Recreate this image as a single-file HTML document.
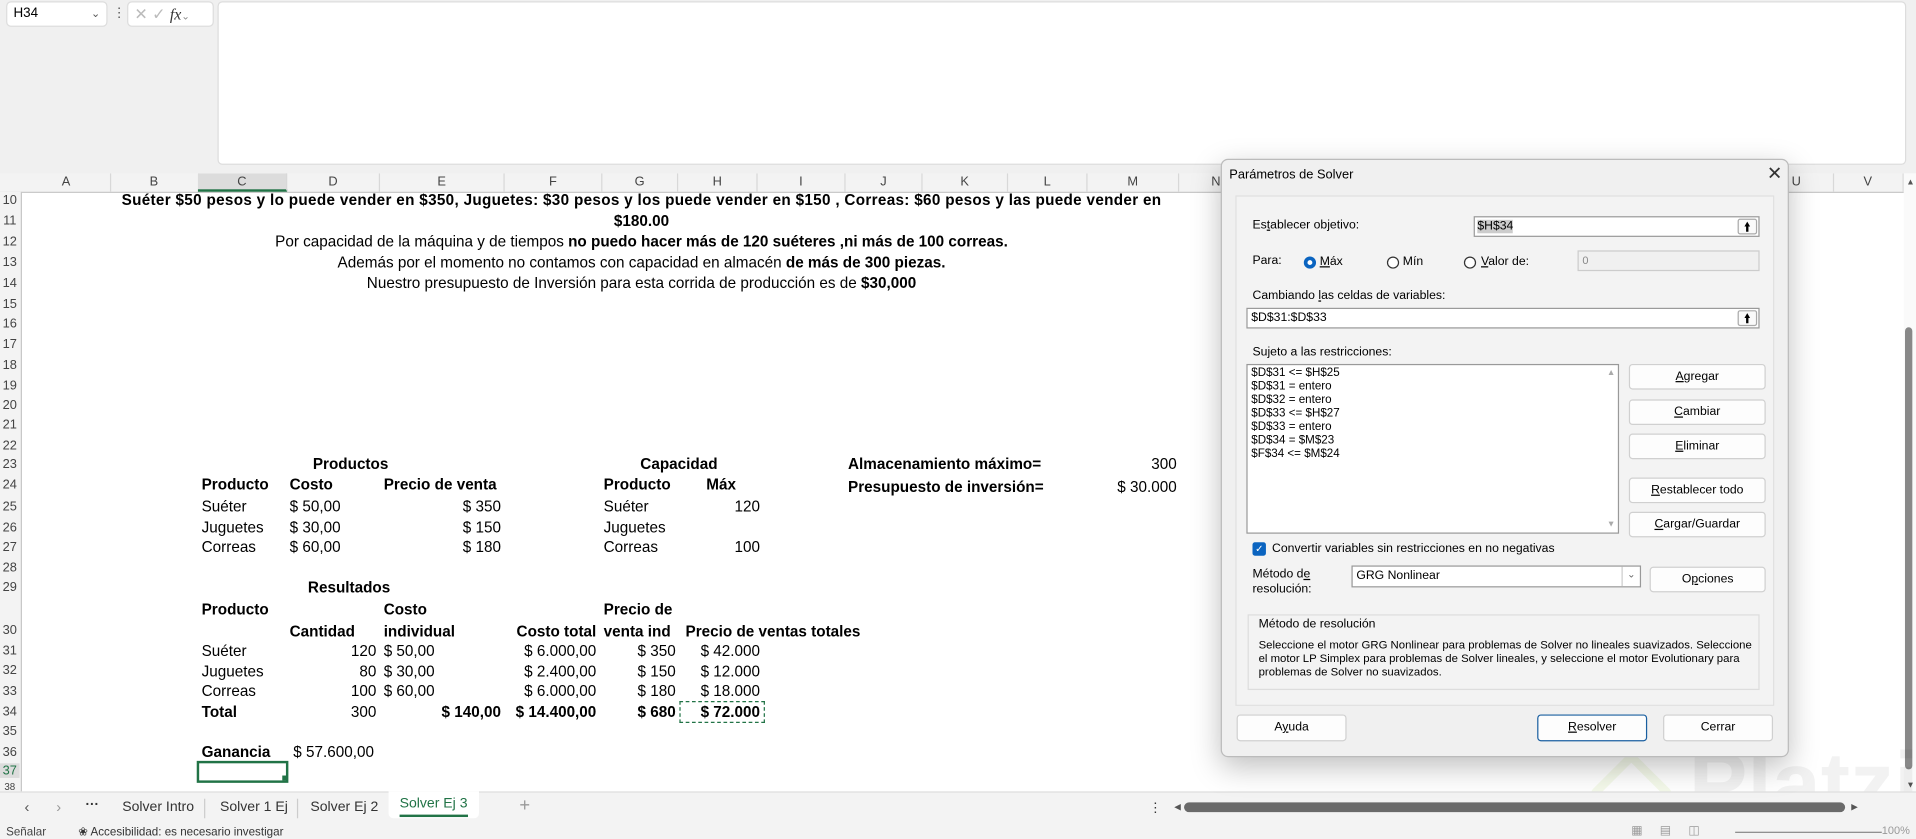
<!DOCTYPE html>
<html><head><meta charset="utf-8"><style>
html,body{margin:0;padding:0;width:1916px;height:839px;overflow:hidden;background:#fff}
#s{position:absolute;left:0;top:0;width:1568px;height:687px;transform:scale(1.22194,1.2213);transform-origin:0 0;background:#fff;font-family:"Liberation Sans",sans-serif;color:#000}
.a{position:absolute;white-space:nowrap}
.c{font-size:12.5px;line-height:16px}
.b{font-weight:bold}
.r{text-align:right}
.rn{position:absolute;left:0;width:16px;text-align:center;font-size:10.5px;color:#444}
.ch{position:absolute;top:142px;height:15px;font-size:10.5px;color:#444;text-align:center;line-height:15px;border-right:1px solid #d8d8d8}
.d{font-size:10px;color:#000}
.btn{position:absolute;background:#fdfdfd;border:1px solid #d0d0d0;border-radius:3px;font-size:10px;text-align:center;line-height:19px;box-sizing:border-box}
.inp{position:absolute;background:#fff;border:1px solid #999;box-sizing:border-box}
.up{position:absolute;right:1px;top:1px;width:14px;bottom:1px;border:1px solid #aaa;border-radius:2px;background:#fafafa;font-size:10px;text-align:center;line-height:14px;font-weight:bold}
.rad{position:absolute;width:10px;height:10px;border:1px solid #333;border-radius:50%;box-sizing:border-box;background:#fff}
u{text-decoration:underline}
</style></head><body><div id="s">
<div class="a" style="left:0;top:0;width:1568px;height:142px;background:#f0f0f0"></div>
<div class="a" style="left:5px;top:1px;width:83px;height:21px;background:#fff;border:1px solid #ddd;border-radius:4px;box-sizing:border-box;font-size:11px;line-height:19px;padding-left:5px">H34<span style="position:absolute;right:5px;color:#555;font-size:9px">&#8964;</span></div>
<div class="a" style="left:92px;top:4px;font-size:11px;color:#555">&#8942;</div>
<div class="a" style="left:104px;top:1px;width:71px;height:21px;background:#fff;border:1px solid #ddd;border-radius:4px;box-sizing:border-box;font-size:13px;line-height:19px;color:#bbb;padding-left:5px">&#x2715; &#x2713; <i style="color:#333;font-family:'Liberation Serif',serif">fx</i><span style="font-size:8px;color:#888">&#8964;</span></div>
<div class="a" style="left:178px;top:1px;width:1382px;height:134px;background:#fff;border:1px solid #ddd;border-radius:4px;box-sizing:border-box"></div>
<div class="a" style="left:0;top:142px;width:1558px;height:15px;background:#f3f3f3;border-bottom:1px solid #c8c8c8"></div>
<div class="ch" style="left:18px;width:72px">A</div><div class="ch" style="left:90px;width:72px">B</div>
<div class="ch" style="left:162px;width:72px;background:#dcdcdc;border-bottom:2px solid #217346;height:13px">C</div>
<div class="ch" style="left:235px;width:75px">D</div><div class="ch" style="left:311px;width:101px">E</div>
<div class="ch" style="left:413px;width:79px">F</div><div class="ch" style="left:493px;width:61px">G</div>
<div class="ch" style="left:555px;width:64px">H</div><div class="ch" style="left:620px;width:71px">I</div>
<div class="ch" style="left:692px;width:62px">J</div><div class="ch" style="left:755px;width:69px">K</div>
<div class="ch" style="left:825px;width:64px">L</div><div class="ch" style="left:890px;width:74px">M</div>
<div class="ch" style="left:965px;width:60px">N</div>
<div class="ch" style="left:1440px;width:60px">U</div><div class="ch" style="left:1500px;width:57px">V</div>
<div class="a" style="left:0;top:157px;width:17px;height:491px;background:#f3f3f3;border-right:1px solid #c8c8c8"></div>
<div class="rn" style="top:158px">10</div><div class="rn" style="top:175px">11</div><div class="rn" style="top:192px">12</div><div class="rn" style="top:209px">13</div><div class="rn" style="top:226px">14</div><div class="rn" style="top:243px">15</div><div class="rn" style="top:259px">16</div><div class="rn" style="top:276px">17</div><div class="rn" style="top:293px">18</div><div class="rn" style="top:310px">19</div><div class="rn" style="top:326px">20</div><div class="rn" style="top:342px">21</div><div class="rn" style="top:359px">22</div><div class="rn" style="top:374px">23</div><div class="rn" style="top:391px">24</div><div class="rn" style="top:409px">25</div><div class="rn" style="top:426px">26</div><div class="rn" style="top:442px">27</div><div class="rn" style="top:459px">28</div><div class="rn" style="top:475px">29</div><div class="rn" style="top:510px">30</div><div class="rn" style="top:527px">31</div><div class="rn" style="top:543px">32</div><div class="rn" style="top:560px">33</div><div class="rn" style="top:577px">34</div><div class="rn" style="top:593px">35</div><div class="rn" style="top:610px">36</div><div class="rn" style="top:625px;color:#217346;background:#dcdcdc">37</div><div class="rn" style="top:640px;font-size:8px">38</div>
<div class="a c b" style="left:90px;width:870px;text-align:center;top:156px;letter-spacing:0.25px">Suéter $50 pesos y lo puede vender en $350, Juguetes: $30 pesos y los puede vender en $150 , Correas: $60 pesos y las puede vender en</div>
<div class="a c b" style="left:90px;width:870px;text-align:center;top:173px">$180.00</div>
<div class="a c" style="left:90px;width:870px;text-align:center;top:190px">Por capacidad de la máquina y de tiempos <b>no puedo hacer más de 120 suéteres ,ni más de 100 correas.</b></div>
<div class="a c" style="left:90px;width:870px;text-align:center;top:207px">Además por el momento no contamos con capacidad en almacén <b>de más de 300 piezas.</b></div>
<div class="a c" style="left:90px;width:870px;text-align:center;top:224px">Nuestro presupuesto de Inversión para esta corrida de producción es de <b>$30,000</b></div>
<div class="a c b" style="left:256px;top:372px">Productos</div>
<div class="a c b" style="left:524px;top:372px">Capacidad</div>
<div class="a c b" style="left:694px;top:372px">Almacenamiento máximo=</div>
<div class="a c r" style="left:900px;width:63px;top:372px">300</div>
<div class="a c b" style="left:165px;top:389px">Producto</div><div class="a c b" style="left:237px;top:389px">Costo</div><div class="a c b" style="left:314px;top:389px">Precio de venta</div>
<div class="a c b" style="left:494px;top:389px">Producto</div><div class="a c b" style="left:578px;top:389px">Máx</div>
<div class="a c b" style="left:694px;top:391px">Presupuesto de inversión=</div>
<div class="a c r" style="left:880px;width:83px;top:391px">$ 30.000</div>
<div class="a c" style="left:165px;top:407px">Suéter</div><div class="a c" style="left:237px;top:407px">$ 50,00</div><div class="a c r" style="left:350px;width:60px;top:407px">$ 350</div><div class="a c" style="left:494px;top:407px">Suéter</div><div class="a c r" style="left:580px;width:42px;top:407px">120</div>
<div class="a c" style="left:165px;top:424px">Juguetes</div><div class="a c" style="left:237px;top:424px">$ 30,00</div><div class="a c r" style="left:350px;width:60px;top:424px">$ 150</div><div class="a c" style="left:494px;top:424px">Juguetes</div>
<div class="a c" style="left:165px;top:440px">Correas</div><div class="a c" style="left:237px;top:440px">$ 60,00</div><div class="a c r" style="left:350px;width:60px;top:440px">$ 180</div><div class="a c" style="left:494px;top:440px">Correas</div><div class="a c r" style="left:580px;width:42px;top:440px">100</div>
<div class="a c b" style="left:252px;top:473px">Resultados</div>
<div class="a c b" style="left:165px;top:491px">Producto</div><div class="a c b" style="left:314px;top:491px">Costo</div><div class="a c b" style="left:494px;top:491px">Precio de</div>
<div class="a c b" style="left:237px;top:509px">Cantidad</div><div class="a c b" style="left:314px;top:509px">individual</div><div class="a c b r" style="left:400px;width:88px;top:509px">Costo total</div><div class="a c b" style="left:494px;top:509px">venta ind</div><div class="a c b" style="left:561px;top:509px">Precio de ventas totales</div>
<div class="a c" style="left:165px;top:525px">Suéter</div><div class="a c r" style="left:260px;width:48px;top:525px">120</div><div class="a c" style="left:314px;top:525px">$ 50,00</div><div class="a c r" style="left:400px;width:88px;top:525px">$ 6.000,00</div><div class="a c r" style="left:500px;width:53px;top:525px">$ 350</div><div class="a c r" style="left:560px;width:62px;top:525px">$ 42.000</div>
<div class="a c" style="left:165px;top:542px">Juguetes</div><div class="a c r" style="left:260px;width:48px;top:542px">80</div><div class="a c" style="left:314px;top:542px">$ 30,00</div><div class="a c r" style="left:400px;width:88px;top:542px">$ 2.400,00</div><div class="a c r" style="left:500px;width:53px;top:542px">$ 150</div><div class="a c r" style="left:560px;width:62px;top:542px">$ 12.000</div>
<div class="a c" style="left:165px;top:558px">Correas</div><div class="a c r" style="left:260px;width:48px;top:558px">100</div><div class="a c" style="left:314px;top:558px">$ 60,00</div><div class="a c r" style="left:400px;width:88px;top:558px">$ 6.000,00</div><div class="a c r" style="left:500px;width:53px;top:558px">$ 180</div><div class="a c r" style="left:560px;width:62px;top:558px">$ 18.000</div>
<div class="a c b" style="left:165px;top:575px">Total</div><div class="a c r" style="left:260px;width:48px;top:575px">300</div><div class="a c b r" style="left:330px;width:80px;top:575px">$ 140,00</div><div class="a c b r" style="left:400px;width:88px;top:575px">$ 14.400,00</div><div class="a c b r" style="left:500px;width:53px;top:575px">$ 680</div><div class="a c b r" style="left:560px;width:62px;top:575px">$ 72.000</div>
<div class="a" style="left:556px;top:574px;width:68px;height:16px;border:1px dashed #217346"></div>
<div class="a c b" style="left:165px;top:608px">Ganancia</div><div class="a c" style="left:240px;top:608px">$ 57.600,00</div>
<div class="a" style="left:161px;top:623px;width:71px;height:14px;border:2px solid #217346"></div>
<div class="a" style="left:231px;top:635px;width:4px;height:4px;background:#217346"></div>
<div class="a" style="left:1558px;top:142px;width:10px;height:506px;background:#fafafa"></div>
<div class="a" style="left:1560px;top:146px;font-size:7px;color:#555">&#9650;</div>
<div class="a" style="left:1560px;top:640px;font-size:7px;color:#555">&#9660;</div>
<div class="a" style="left:1559px;top:268px;width:6px;height:362px;background:#888;border-radius:3px"></div>
<div class="a" style="left:1382px;top:606px;font-size:72px;line-height:72px;color:rgba(0,0,0,0.05);font-weight:bold">Platzi</div>
<div class="a" style="left:1310px;top:625px;width:36px;height:36px;border:7px solid rgba(150,200,50,0.1);transform:rotate(45deg);border-radius:6px"></div>
<div class="a" style="left:0;top:648px;width:1568px;height:25px;background:#f3f3f3;border-top:1px solid #ddd"></div>
<div class="a" style="left:20px;top:654px;font-size:12px;color:#555">&#8249;</div>
<div class="a" style="left:46px;top:654px;font-size:12px;color:#999">&#8250;</div>
<div class="a" style="left:70px;top:653px;font-size:11px;color:#333;font-weight:bold">&middot;&middot;&middot;</div>
<div class="a" style="left:100px;top:655px;font-size:11.5px;color:#333">Solver Intro</div>
<div class="a" style="left:167px;top:654px;width:1px;height:16px;background:#ccc"></div>
<div class="a" style="left:180px;top:655px;font-size:11.5px;color:#333">Solver 1 Ej</div>
<div class="a" style="left:243px;top:654px;width:1px;height:16px;background:#ccc"></div>
<div class="a" style="left:254px;top:655px;font-size:11.5px;color:#333">Solver Ej 2</div>
<div class="a" style="left:318px;top:648px;width:74px;height:22px;background:#fff;border-radius:0 0 4px 4px"></div>
<div class="a" style="left:327px;top:652px;font-size:11.5px;color:#217346">Solver Ej 3</div>
<div class="a" style="left:327px;top:667px;width:56px;height:2px;background:#217346"></div>
<div class="a" style="left:425px;top:651px;font-size:15px;color:#999">+</div>
<div class="a" style="left:940px;top:655px;font-size:11px;color:#333">&#8942;</div>
<div class="a" style="left:961px;top:657px;font-size:7px;color:#555">&#9664;</div>
<div class="a" style="left:969px;top:657px;width:541px;height:8px;background:#6a6a6a;border-radius:4px"></div>
<div class="a" style="left:1515px;top:657px;font-size:7px;color:#555">&#9654;</div>
<div class="a" style="left:0;top:673px;width:1568px;height:14px;background:#f3f3f3"></div>
<div class="a" style="left:5px;top:676px;font-size:9.5px;color:#444">Señalar</div>
<div class="a" style="left:64px;top:676px;font-size:9.5px;color:#333">&#10048; Accesibilidad: es necesario investigar</div>
<div class="a" style="left:1335px;top:675px;font-size:10px;color:#999">&#9638; &nbsp;&nbsp;&nbsp; &#9636; &nbsp;&nbsp;&nbsp; &#9707;</div>
<div class="a" style="left:1420px;top:681px;width:120px;height:1px;background:#888"></div>
<div class="a" style="left:1540px;top:675px;font-size:9px;color:#999">100%</div>
<div class="a" style="left:999px;top:130px;width:465px;height:490px;background:#f0f0f0;border:1px solid #bbb;border-radius:6px;box-sizing:border-box;box-shadow:0 8px 24px rgba(0,0,0,0.25)"></div>
<div class="a d" style="left:1006px;top:137px;font-size:10.5px">Parámetros de Solver</div>
<div class="a" style="left:1446px;top:133px;font-size:15px;color:#333">&#x2715;</div>
<div class="a" style="left:1011px;top:160px;width:441px;height:418px;border:1px solid #e0e0e0;background:#f3f3f3;box-sizing:border-box"></div>
<div class="a d" style="left:1025px;top:179px">Es<u>t</u>ablecer objetivo:</div>
<div class="inp" style="left:1206px;top:177px;width:234px;height:17px"><span style="position:absolute;left:2px;top:2px;font-size:10px;background:#ccc">$H$34</span><div class="up">&#129049;</div></div>
<div class="a d" style="left:1025px;top:208px">Para:</div>
<div class="rad" style="left:1067px;top:210px;border:3px solid #0a64c0"></div>
<div class="a d" style="left:1080px;top:209px"><u>M</u>áx</div>
<div class="rad" style="left:1135px;top:210px"></div><div class="a d" style="left:1148px;top:209px">Mín</div>
<div class="rad" style="left:1198px;top:210px"></div><div class="a d" style="left:1212px;top:209px"><u>V</u>alor de:</div>
<div class="a" style="left:1291px;top:205px;width:149px;height:17px;background:#f0f0f0;border:1px solid #ccc;box-sizing:border-box;font-size:9px;color:#888;padding-left:3px;line-height:14px">0</div>
<div class="a d" style="left:1025px;top:237px">Cambiando <u>l</u>as celdas de variables:</div>
<div class="inp" style="left:1020px;top:252px;width:420px;height:17px"><span style="position:absolute;left:3px;top:2px;font-size:10px">$D$31:$D$33</span><div class="up">&#129049;</div></div>
<div class="a d" style="left:1025px;top:283px">Su<u>j</u>eto a las restricciones:</div>
<div class="a" style="left:1020px;top:298px;width:305px;height:139px;background:#fff;border:1px solid #999;box-sizing:border-box;font-size:9.5px;line-height:11px;padding:1px 3px">$D$31 &lt;= $H$25<br>$D$31 = entero<br>$D$32 = entero<br>$D$33 &lt;= $H$27<br>$D$33 = entero<br>$D$34 = $M$23<br>$F$34 &lt;= $M$24</div>
<div class="a" style="left:1315px;top:302px;font-size:7px;color:#aaa">&#9650;</div>
<div class="a" style="left:1315px;top:426px;font-size:7px;color:#aaa">&#9660;</div>
<div class="btn" style="left:1333px;top:298px;width:112px;height:21px"><u>A</u>gregar</div>
<div class="btn" style="left:1333px;top:327px;width:112px;height:21px"><u>C</u>ambiar</div>
<div class="btn" style="left:1333px;top:355px;width:112px;height:21px"><u>E</u>liminar</div>
<div class="btn" style="left:1333px;top:391px;width:112px;height:21px"><u>R</u>establecer todo</div>
<div class="btn" style="left:1333px;top:419px;width:112px;height:21px"><u>C</u>argar/Guardar</div>
<div class="a" style="left:1025px;top:444px;width:11px;height:11px;background:#0a64c0;border-radius:2px;color:#fff;font-size:8px;text-align:center;line-height:11px">&#10003;</div>
<div class="a d" style="left:1041px;top:444px">Convertir variables sin restricciones en no negativas</div>
<div class="a d" style="left:1025px;top:465px;line-height:12px">Método d<u>e</u><br>resolución:</div>
<div class="inp" style="left:1106px;top:463px;width:237px;height:18px"><span style="position:absolute;left:3px;top:2px;font-size:10px">GRG Nonlinear</span><span style="position:absolute;right:0;top:0;width:14px;height:16px;border-left:1px solid #ccc;font-size:8px;color:#666;text-align:center;line-height:14px">&#8964;</span></div>
<div class="btn" style="left:1350px;top:464px;width:95px;height:21px">O<u>p</u>ciones</div>
<div class="a" style="left:1021px;top:503px;width:419px;height:62px;border:1px solid #ddd;box-sizing:border-box"></div>
<div class="a d" style="left:1030px;top:506px">Método de resolución</div>
<div class="a d" style="left:1030px;top:523px;font-size:9.3px;line-height:11px;white-space:normal;width:405px">Seleccione el motor GRG Nonlinear para problemas de Solver no lineales suavizados. Seleccione el motor LP Simplex para problemas de Solver lineales, y seleccione el motor Evolutionary para problemas de Solver no suavizados.</div>
<div class="btn" style="left:1012px;top:585px;width:90px;height:22px;line-height:20px">A<u>y</u>uda</div>
<div class="btn" style="left:1258px;top:585px;width:90px;height:22px;line-height:20px;border-color:#1a5fa0"><u>R</u>esolver</div>
<div class="btn" style="left:1361px;top:585px;width:90px;height:22px;line-height:20px">Cerrar</div>
</div></body></html>
